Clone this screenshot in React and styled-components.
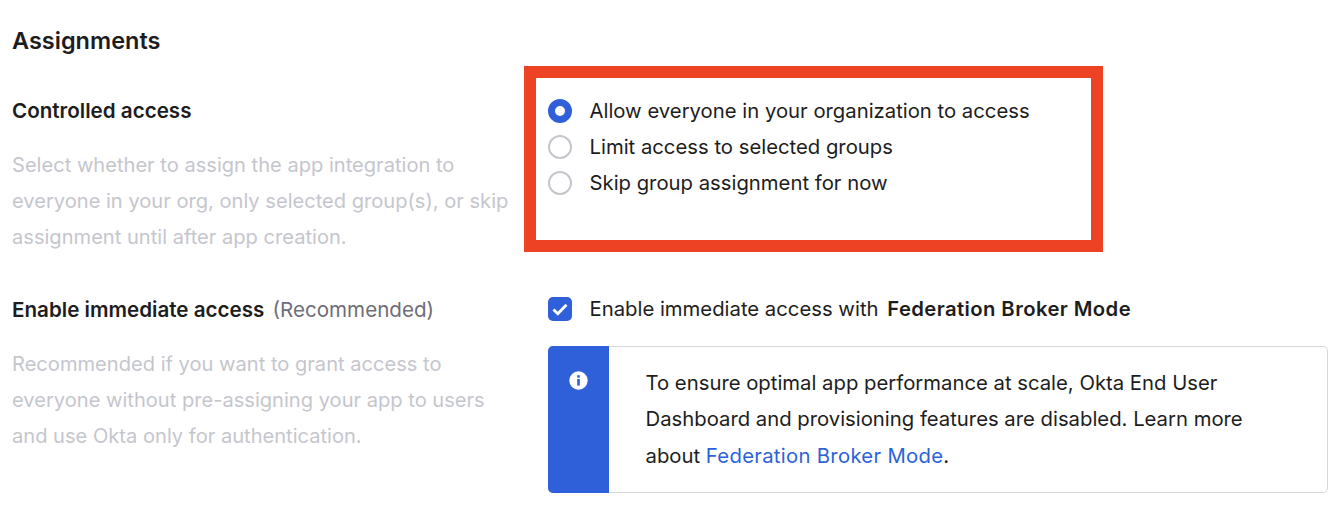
import React from 'react'
import styled, { createGlobalStyle } from 'styled-components'

const GlobalStyle = createGlobalStyle`
  html, body { margin: 0; padding: 0; background: #fff; }
  body { font-family: Inter, "Open Sans", sans-serif; color: #1d1d21; }
`

const options = [
  { id: 1, label: 'Allow everyone in your organization to access', checked: true },
  { id: 2, label: 'Limit access to selected groups' },
  { id: 3, label: 'Skip group assignment for now' },
]

function App() {
  return (
    <Page>
      <GlobalStyle />
      <Title>Assignments</Title>
      <Row>
        <LeftColumn $top={30}>
          <Label>Controlled access</Label>
          <Description>
            Select whether to assign the app integration to everyone in your org, only selected
            group(s), or skip assignment until after app creation.
          </Description>
        </LeftColumn>
        <HighlightBox>
          {options.map((option) => (
            <OptionRow key={option.id}>
              <Radio $checked={option.checked} />
              <OptionText>{option.label}</OptionText>
            </OptionRow>
          ))}
        </HighlightBox>
      </Row>
      <SecondRow>
        <LeftColumn $top={3.5}>
          <Label>
            Enable immediate access <Hint>(Recommended)</Hint>
          </Label>
          <Description>
            Recommended if you want to grant access to everyone without pre-assigning your app to
            users and use Okta only for authentication.
          </Description>
        </LeftColumn>
        <RightColumn>
          <OptionRow>
            <Checkbox>
              <svg width="16" height="13" viewBox="0 0 16 13" fill="none">
                <path d="M1.5 6.6 5.8 10.8 14.5 1.8" stroke="#fff" strokeWidth="2.8" />
              </svg>
            </Checkbox>
            <OptionText>
              Enable immediate access with <strong>Federation Broker Mode</strong>
            </OptionText>
          </OptionRow>
          <Callout>
            <CalloutSide>
              <svg width="19" height="19" viewBox="0 0 19 19">
                <circle cx="9.5" cy="9.5" r="9.2" fill="#fff" />
                <rect x="8.2" y="8" width="2.6" height="6.6" fill="#2f60d9" />
                <rect x="8.2" y="4.2" width="2.6" height="2.5" fill="#2f60d9" />
              </svg>
            </CalloutSide>
            <CalloutText>
              To ensure optimal app performance at scale, Okta End User Dashboard and provisioning
              features are disabled. Learn more about <CalloutLink href="#">Federation Broker Mode</CalloutLink>.
            </CalloutText>
          </Callout>
        </RightColumn>
      </SecondRow>
    </Page>
  )
}

const Page = styled.div`
  width: 1336px;
  height: 522px;
  box-sizing: border-box;
  padding: 27px 0 0 12px;
  overflow: hidden;
`
const Title = styled.h2`
  margin: 0 0 10.5px;
  font-size: 23.5px;
  line-height: 28px;
  font-weight: 600;
`
const Row = styled.div`
  display: flex;
  align-items: flex-start;
  height: 186.5px;
`
const SecondRow = styled(Row)`
  height: auto;
  margin-top: 39px;
`
const LeftColumn = styled.div`
  width: 511.5px;
  padding-top: ${(p) => p.$top}px;
  flex: none;
`
const Label = styled.div`
  font-size: 20.6px;
  line-height: 30px;
  font-weight: 600;
`
const Hint = styled.span`
  font-weight: 400;
  color: #6e6e78;
  margin-left: 3px;
`
const Description = styled.p`
  margin: 21px 0 0;
  width: 506px;
  font-size: 20.1px;
  line-height: 36.4px;
  color: #c5c6cd;
`
const HighlightBox = styled.div`
  width: 579.5px;
  height: 186.5px;
  box-sizing: border-box;
  border: 12.5px solid #ee4224;
  padding: 15px 0 0 12px;
`
const RightColumn = styled.div`
  width: 780px;
  margin-left: 24px;
`
const OptionRow = styled.div`
  display: flex;
  align-items: center;
  height: 36.2px;
`
const Radio = styled.span`
  box-sizing: border-box;
  width: 24px;
  height: 24px;
  border-radius: 50%;
  flex: none;
  margin-right: 18px;
  background: #fff;
  border: ${(p) => (p.$checked ? '7.5px solid #2f60d9' : '2px solid #c5c6cd')};
`
const Checkbox = styled.span`
  box-sizing: border-box;
  width: 24px;
  height: 24px;
  border-radius: 5px;
  flex: none;
  margin-right: 18px;
  background: #2f60d9;
  display: flex;
  align-items: center;
  justify-content: center;
`
const OptionText = styled.span`
  font-size: 20.3px;
  line-height: 30px;
  white-space: nowrap;
  strong { font-weight: 600; letter-spacing: 0.4px; margin-left: 3px; }
`
const Callout = styled.div`
  display: flex;
  box-sizing: border-box;
  margin-top: 19px;
  width: 780px;
  height: 147px;
  border: 1px solid #d7d8dd;
  border-left: none;
  border-radius: 5px;
`
const CalloutSide = styled.div`
  width: 61px;
  flex: none;
  margin: -1px 0;
  background: #2f60d9;
  border-radius: 5px 0 0 5px;
  display: flex;
  justify-content: center;
  padding-top: 25px;
`
const CalloutText = styled.p`
  margin: 0;
  padding: 18px 60px 0 37px;
  font-size: 20.3px;
  line-height: 36.2px;
`
const CalloutLink = styled.a`
  color: #2b62d9;
  text-decoration: none;
  letter-spacing: 0.3px;
`

export default App
